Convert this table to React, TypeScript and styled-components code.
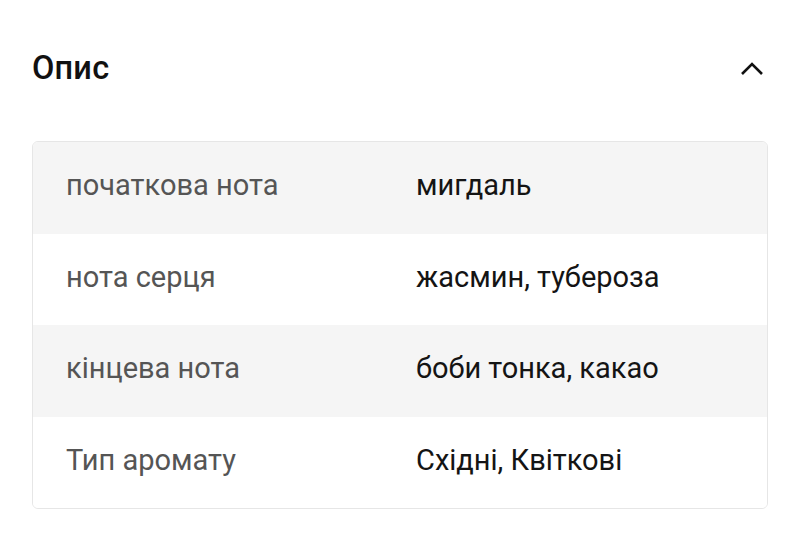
import React from "react";
import styled, { createGlobalStyle } from "styled-components";

const Global = createGlobalStyle`
  html, body { margin: 0; padding: 0; background: #fff; }
  body { font-family: Roboto, "Noto Sans", sans-serif; }
`;

const Page = styled.div`
  width: 800px;
  height: 542px;
  box-sizing: border-box;
  padding: 0 32px;
  background: #fff;
`;

const Header = styled.div`
  height: 141px;
  display: flex;
  align-items: center;
  justify-content: space-between;
  padding-bottom: 6px;
  box-sizing: border-box;
`;

const Title = styled.h2`
  margin: 0;
  font-size: 32.5px;
  font-weight: 500;
  color: #111;
  letter-spacing: 0.2px;
`;

const Toggle = styled.button`
  border: 0;
  background: none;
  padding: 0;
  margin-right: 3px;
  margin-top: 2px;
  width: 26px;
  height: 26px;
  display: flex;
  align-items: center;
  justify-content: center;
  cursor: pointer;
`;

const Table = styled.div`
  border: 1px solid #e6e6e6;
  border-radius: 6px;
  overflow: hidden;
`;

const Row = styled.div<{ $shaded: boolean }>`
  display: grid;
  grid-template-columns: 350px 1fr;
  height: 91.5px;
  align-items: center;
  padding-left: 33px;
  padding-bottom: 5px;
  box-sizing: border-box;
  background: ${(p) => (p.$shaded ? "#f5f5f5" : "#fff")};
  font-size: 29px;
`;

const Label = styled.span`
  color: #555;
`;

const Value = styled.span`
  color: #141414;
`;

const rows = [
  ["початкова нота", "мигдаль"],
  ["нота серця", "жасмин, тубероза"],
  ["кінцева нота", "боби тонка, какао"],
  ["Тип аромату", "Східні, Квіткові"],
];

export default function App() {
  return (
    <Page>
      <Global />
      <Header>
        <Title>Опис</Title>
        <Toggle aria-label="collapse">
          <svg width="24" height="16" viewBox="0 0 24 16" fill="none">
            <path d="M2 13 L12 3 L22 13" stroke="#111" strokeWidth="2.6" strokeLinecap="butt" strokeLinejoin="miter" />
          </svg>
        </Toggle>
      </Header>
      <Table>
        {rows.map(([l, v], i) => (
          <Row key={l} $shaded={i % 2 === 0}>
            <Label>{l}</Label>
            <Value>{v}</Value>
          </Row>
        ))}
      </Table>
    </Page>
  );
}
